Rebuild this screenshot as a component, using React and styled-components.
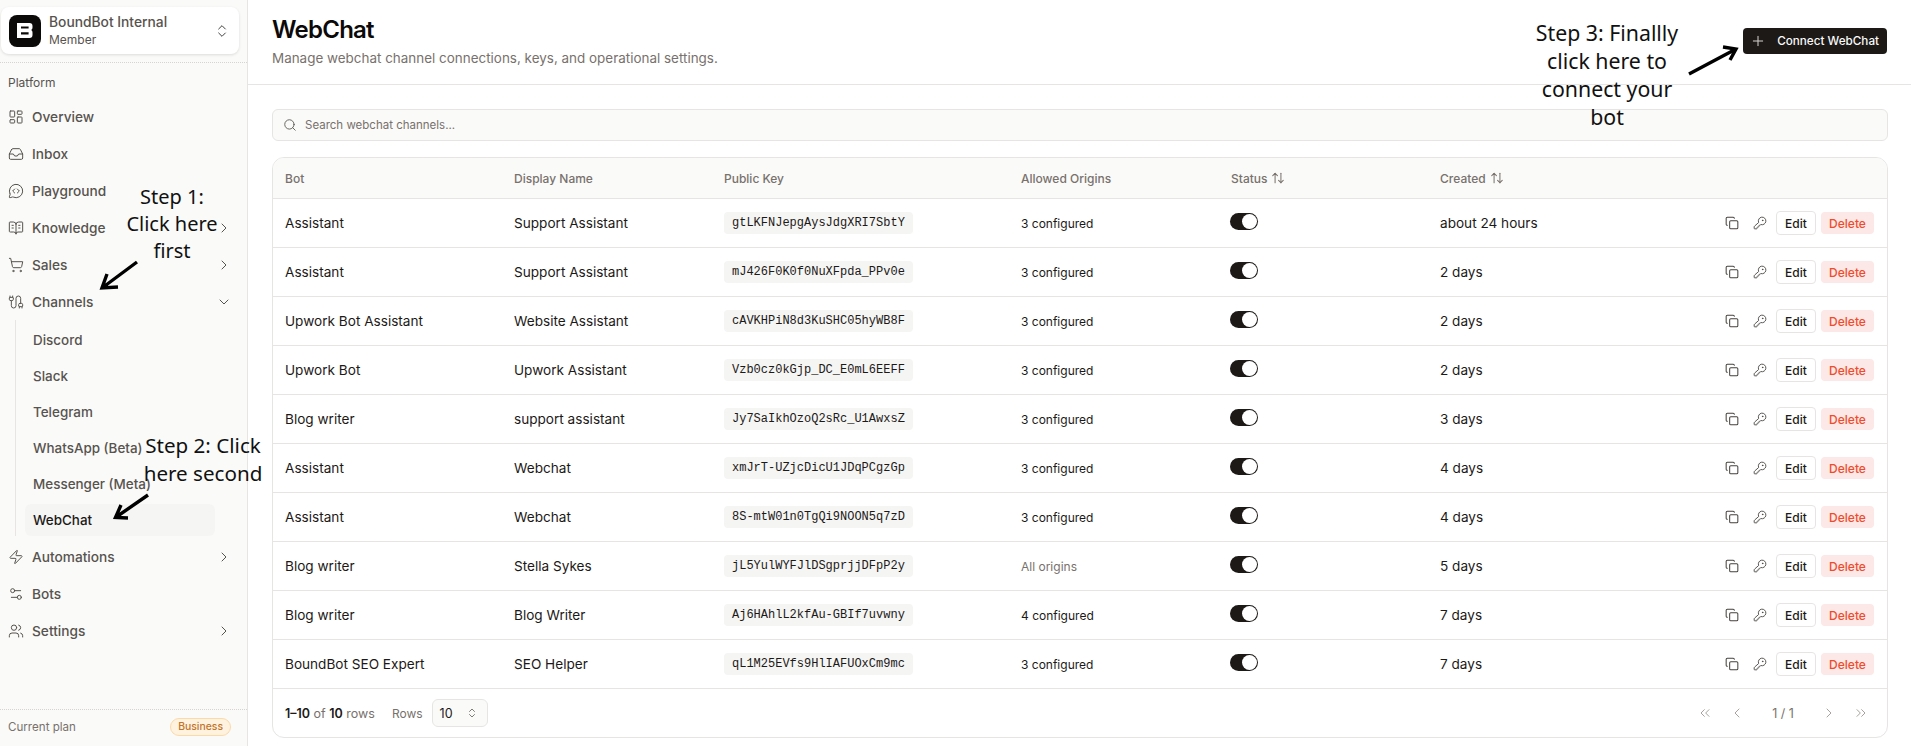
import React from 'react';
import styled, { createGlobalStyle } from 'styled-components';
import {
  LayoutDashboard,
  Inbox,
  MessageCircleCode,
  BookOpenText,
  ShoppingCart,
  Cable,
  Zap,
  Settings2,
  Users,
  ChevronRight,
  ChevronDown,
  ChevronsUpDown,
  ChevronLeft,
  ChevronsLeft,
  ChevronsRight,
  Search,
  Plus,
  Copy,
  KeyRound,
  ArrowUpDown,
} from 'lucide-react';

const GlobalStyle = createGlobalStyle`
  html, body {
    margin: 0;
    padding: 0;
    height: 100%;
    overflow: hidden;
    background: #fff;
    font-family: Inter, "Liberation Sans", sans-serif;
    color: #1c1917;
  }
  * { box-sizing: border-box; }
`;

const ROWS = [
  ['Assistant', 'Support Assistant', 'gtLKFNJepgAysJdgXRI7SbtY', '3 configured', 'about 24 hours'],
  ['Assistant', 'Support Assistant', 'mJ426F0K0f0NuXFpda_PPv0e', '3 configured', '2 days'],
  ['Upwork Bot Assistant', 'Website Assistant', 'cAVKHPiN8d3KuSHC05hyWB8F', '3 configured', '2 days'],
  ['Upwork Bot', 'Upwork Assistant', 'Vzb0cz0kGjp_DC_E0mL6EEFF', '3 configured', '2 days'],
  ['Blog writer', 'support assistant', 'Jy7SaIkhOzoQ2sRc_U1AwxsZ', '3 configured', '3 days'],
  ['Assistant', 'Webchat', 'xmJrT-UZjcDicU1JDqPCgzGp', '3 configured', '4 days'],
  ['Assistant', 'Webchat', '8S-mtW01n0TgQi9NOON5q7zD', '3 configured', '4 days'],
  ['Blog writer', 'Stella Sykes', 'jL5YulWYFJlDSgprjjDFpP2y', 'All origins', '5 days'],
  ['Blog writer', 'Blog Writer', 'Aj6HAhlL2kfAu-GBIf7uvwny', '4 configured', '7 days'],
  ['BoundBot SEO Expert', 'SEO Helper', 'qL1M25EVfs9HlIAFUOxCm9mc', '3 configured', '7 days'],
];

const NAV_TOP = [
  { label: 'Overview', icon: LayoutDashboard },
  { label: 'Inbox', icon: Inbox },
  { label: 'Playground', icon: MessageCircleCode },
  { label: 'Knowledge', icon: BookOpenText, more: true },
  { label: 'Sales', icon: ShoppingCart, more: true },
];

const SUB_ITEMS = ['Discord', 'Slack', 'Telegram', 'WhatsApp (Beta)', 'Messenger (Meta)'];

const NAV_BOTTOM = [
  { label: 'Automations', icon: Zap, more: true },
  { label: 'Bots', icon: Settings2 },
  { label: 'Settings', icon: Users, more: true },
];

const NavLink = ({ item }) => {
  const Icon = item.icon;
  return (
    <NavItem>
      <Icon size={16} strokeWidth={1.5} />
      <NavLabel>{item.label}</NavLabel>
      {item.more && <ChevronRight size={16} strokeWidth={1.5} />}
    </NavItem>
  );
};

const Arrow = ({ $x, $y, w, h, d }) => (
  <ArrowSvg $x={$x} $y={$y} width={w} height={h} viewBox={`0 0 ${w} ${h}`}>
    <path d={d} fill="none" stroke="#000" strokeWidth="3.4" />
  </ArrowSvg>
);

const App = () => (
  <Page>
    <GlobalStyle />
    <Sidebar>
      <TeamWrap>
        <TeamCard>
          <TeamLogo>
            <svg width="16" height="15" viewBox="0 0 16 15">
              <path
                fillRule="evenodd"
                d="M0 0h12.5A3 3 0 0 1 15.5 3v1.5a2.6 2.6 0 0 1-1 2.2l-.3.3.3.3a2.6 2.6 0 0 1 1 2.2V12a3 3 0 0 1-3 3H0zM4 3.4v2.2h7.6V3.4zM4 9.2v2.4h7.6V9.2z"
                fill="#fff"
              />
            </svg>
          </TeamLogo>
          <TeamText>
            <TeamName>BoundBot Internal</TeamName>
            <TeamRole>Member</TeamRole>
          </TeamText>
          <ChevronsUpDown size={16} strokeWidth={1.5} color="#44403c" />
        </TeamCard>
      </TeamWrap>
      <NavSection>
        <SectionLabel>Platform</SectionLabel>
        {NAV_TOP.map((item) => (
          <NavLink key={item.label} item={item} />
        ))}
        <NavItem>
          <Cable size={16} strokeWidth={1.5} />
          <NavLabel>Channels</NavLabel>
          <ChevronDown size={16} strokeWidth={1.5} />
        </NavItem>
        <SubList>
          {SUB_ITEMS.map((label) => (
            <SubItem key={label}>{label}</SubItem>
          ))}
          <SubItem $active>WebChat</SubItem>
        </SubList>
        {NAV_BOTTOM.map((item) => (
          <NavLink key={item.label} item={item} />
        ))}
      </NavSection>
      <PlanBar>
        <PlanLabel>Current plan</PlanLabel>
        <PlanBadge>Business</PlanBadge>
      </PlanBar>
    </Sidebar>

    <Main>
      <Header>
        <div>
          <Title>WebChat</Title>
          <Subtitle>Manage webchat channel connections, keys, and operational settings.</Subtitle>
        </div>
        <ConnectButton>
          <Plus size={16} strokeWidth={1.5} color="#d6d3d1" />
          Connect WebChat
        </ConnectButton>
      </Header>
      <Content>
        <SearchBox>
          <Search size={14} strokeWidth={1.5} color="#57534e" />
          <SearchText>Search webchat channels...</SearchText>
        </SearchBox>
        <TableCard>
          <HeadRow>
            <HeadCell>Bot</HeadCell>
            <HeadCell>Display Name</HeadCell>
            <HeadCell>Public Key</HeadCell>
            <HeadCell>Allowed Origins</HeadCell>
            <HeadCell>
              Status <ArrowUpDown size={14} strokeWidth={1.75} />
            </HeadCell>
            <HeadCell>
              Created <ArrowUpDown size={14} strokeWidth={1.75} />
            </HeadCell>
            <span />
          </HeadRow>
          {ROWS.map(([bot, name, key, origins, created]) => (
            <BodyRow key={key}>
              <BodyCell>{bot}</BodyCell>
              <BodyCell>{name}</BodyCell>
              <BodyCell>
                <KeyChip>{key}</KeyChip>
              </BodyCell>
              <OriginCell $muted={origins === 'All origins'}>{origins}</OriginCell>
              <BodyCell>
                <Toggle />
              </BodyCell>
              <BodyCell>{created}</BodyCell>
              <Actions>
                <IconAction>
                  <Copy size={14} strokeWidth={1.75} />
                </IconAction>
                <IconAction>
                  <KeyRound size={14} strokeWidth={1.5} />
                </IconAction>
                <EditButton>Edit</EditButton>
                <DeleteButton>Delete</DeleteButton>
              </Actions>
            </BodyRow>
          ))}
          <TableFooter>
            <RowCount>
              <b>1–10</b> of <b>10</b> rows
            </RowCount>
            <RowsLabel>Rows</RowsLabel>
            <RowsSelect>
              10
              <ChevronsUpDown size={12} strokeWidth={1.5} color="#57534e" />
            </RowsSelect>
            <Pager>
              <ChevronsLeft size={16} strokeWidth={1.5} />
              <ChevronLeft size={16} strokeWidth={1.5} />
              <PageText>1 / 1</PageText>
              <ChevronRight size={16} strokeWidth={1.5} />
              <ChevronsRight size={16} strokeWidth={1.5} />
            </Pager>
          </TableFooter>
        </TableCard>
      </Content>
    </Main>

    <Note $x={112} $y={183} $w={120} $size={20} $line={27}>Step 1:<br />Click here<br />first</Note>
    <Arrow $x={96} $y={256} w={46} h={40} d="M41 6L6 32M22 31L6 32L11 18" />
    <Note $x={138} $y={431} $w={130} $size={20.6} $line={28}>Step 2: Click<br />here second</Note>
    <Arrow $x={110} $y={490} w={44} h={34} d="M38 5L5.5 27.5M18 28L5.5 27.5L11 15" />
    <Note $x={1517} $y={19} $w={180} $size={21.3} $line={28}>Step 3: Finallly<br />click here to<br />connect your<br />bot</Note>
    <Arrow $x={1684} $y={42} w={58} h={36} d="M5 32L52 7M39 5L52 7L46 18" />
  </Page>
);

const Page = styled.div`
  position: relative;
  display: flex;
  width: 100%;
  height: 746px;
  overflow: hidden;
`;

const Sidebar = styled.aside`
  flex: 0 0 248px;
  display: flex;
  flex-direction: column;
  background: #fafaf9;
  border-right: 1px solid #e7e5e4;
`;

const TeamWrap = styled.div`
  height: 63px;
  padding: 7px 8px 0 1px;
  border-bottom: 1px dotted #d6d3d1;
`;

const TeamCard = styled.div`
  display: flex;
  align-items: center;
  height: 47px;
  padding: 0 9px 0 8px;
  gap: 8px;
  background: #fff;
  border-radius: 8px;
  box-shadow: 0 1px 3px rgba(0, 0, 0, 0.12);
`;

const TeamLogo = styled.div`
  flex: 0 0 32px;
  height: 32px;
  display: flex;
  align-items: center;
  justify-content: center;
  background: #0c0a09;
  border-radius: 8px;
`;

const TeamText = styled.div`
  flex: 1;
  display: flex;
  flex-direction: column;
  gap: 1px;
`;

const TeamName = styled.span`
  font-size: 13.8px;
  line-height: 17px;
  font-weight: 500;
  color: #57534e;
`;

const TeamRole = styled.span`
  font-size: 12px;
  line-height: 15px;
  color: #57534e;
`;

const NavSection = styled.nav`
  flex: 1;
  display: flex;
  flex-direction: column;
  padding: 11px 8px 0;
`;

const SectionLabel = styled.div`
  height: 18px;
  line-height: 18px;
  font-size: 12px;
  color: #57534e;
  margin-bottom: 6px;
`;

const NavItem = styled.div`
  display: flex;
  align-items: center;
  height: 37px;
  gap: 8px;
  padding-right: 7px;
  color: #57534e;
  svg { flex: none; }
`;

const NavLabel = styled.span`
  flex: 1;
  font-size: 13.7px;
  font-weight: 500;
`;

const SubList = styled.div`
  display: flex;
  flex-direction: column;
  margin: 0 0 2px 7px;
  padding: 2px 24px 0 9px;
  border-left: 1px solid #e7e5e4;
`;

const SubItem = styled.div`
  display: flex;
  align-items: center;
  height: ${(p) => (p.$active ? '32px' : '36px')};
  margin-top: ${(p) => (p.$active ? '2px' : '0')};
  padding-left: 8px;
  font-size: 13.45px;
  font-weight: 500;
  white-space: nowrap;
  border-radius: 6px;
  color: ${(p) => (p.$active ? '#1c1917' : '#57534e')};
  background: ${(p) => (p.$active ? '#f5f5f4' : 'transparent')};
`;

const PlanBar = styled.div`
  display: flex;
  align-items: center;
  justify-content: space-between;
  height: 37px;
  padding: 0 16px 2px 8px;
  border-top: 1px dotted #d6d3d1;
`;

const PlanLabel = styled.span`
  font-size: 11.6px;
  color: #78716c;
`;

const PlanBadge = styled.span`
  padding: 1px 7px;
  font-size: 10.4px;
  line-height: 14px;
  font-weight: 500;
  color: #c2742b;
  background: #fff3e0;
  border: 1px solid #fcd9a8;
  border-radius: 999px;
`;

const Main = styled.main`
  flex: 1;
  min-width: 0;
  display: flex;
  flex-direction: column;
`;

const Header = styled.header`
  display: flex;
  align-items: flex-start;
  justify-content: space-between;
  height: 85px;
  padding: 16px 24px 0 24px;
  border-bottom: 1px solid #e7e5e4;
`;

const Title = styled.h1`
  margin: 0;
  font-size: 24px;
  line-height: 28px;
  font-weight: 600;
  letter-spacing: -0.75px;
  color: #0c0a09;
`;

const Subtitle = styled.p`
  margin: 5px 0 0;
  font-size: 13.44px;
  line-height: 18px;
  color: #78716c;
`;

const ConnectButton = styled.button`
  display: flex;
  align-items: center;
  gap: 11px;
  height: 26px;
  margin-top: 12px;
  padding: 0 8px 0 7px;
  font-family: inherit;
  font-size: 11.7px;
  font-weight: 500;
  color: #fafaf9;
  background: #1c1917;
  border: 0;
  border-radius: 4px;
`;

const Content = styled.div`
  flex: 1;
  display: flex;
  flex-direction: column;
  padding: 24px 23px 0 24px;
`;

const SearchBox = styled.div`
  display: flex;
  align-items: center;
  gap: 8px;
  height: 32px;
  padding: 0 10px;
  background: #fafaf9;
  border: 1px solid #e7e5e4;
  border-radius: 6px;
`;

const SearchText = styled.span`
  font-size: 11.5px;
  color: #78716c;
`;

const TableCard = styled.div`
  margin-top: 16px;
  background: #fff;
  border: 1px solid #e7e5e4;
  border-radius: 12px;
  overflow: hidden;
`;

const columns = '229px 210px 297px 210px 209px 1fr 1fr';

const HeadRow = styled.div`
  display: grid;
  grid-template-columns: ${columns};
  align-items: center;
  height: 41px;
  background: #fafaf9;
  border-bottom: 1px solid #e7e5e4;
`;

const HeadCell = styled.div`
  display: flex;
  align-items: center;
  gap: 4px;
  padding-left: 12px;
  font-size: 12px;
  font-weight: 500;
  color: #78716c;
`;

const BodyRow = styled.div`
  display: grid;
  grid-template-columns: ${columns};
  align-items: center;
  height: 49px;
  border-bottom: 1px solid #e7e5e4;
`;

const BodyCell = styled.div`
  padding-left: 12px;
  font-size: 13.6px;
  color: #1c1917;
  white-space: nowrap;
`;

const OriginCell = styled(BodyCell)`
  font-size: 12px;
  color: ${(p) => (p.$muted ? '#78716c' : '#1c1917')};
`;

const KeyChip = styled.code`
  display: inline-block;
  padding: 3px 8px;
  font-family: "Liberation Mono", monospace;
  font-size: 12px;
  line-height: 16px;
  background: #f5f5f4;
  border-radius: 4px;
`;

const Toggle = styled.span`
  position: relative;
  display: block;
  width: 28px;
  height: 17px;
  margin: -4px 0 0 -1px;
  background: #1c1917;
  border-radius: 999px;
  &::after {
    content: '';
    position: absolute;
    top: 1px;
    right: 1px;
    width: 15px;
    height: 15px;
    background: #fff;
    border-radius: 50%;
  }
`;

const Actions = styled.div`
  display: flex;
  align-items: center;
  justify-content: flex-end;
  padding-right: 13px;
`;

const IconAction = styled.span`
  display: flex;
  align-items: center;
  justify-content: center;
  width: 28px;
  height: 24px;
  color: #44403c;
`;

const EditButton = styled.button`
  height: 24px;
  width: 40px;
  margin-left: 2px;
  padding: 0;
  font-family: inherit;
  font-size: 12px;
  font-weight: 500;
  color: #1c1917;
  background: #fff;
  border: 1px solid #e7e5e4;
  border-radius: 4px;
`;

const DeleteButton = styled.button`
  height: 22px;
  width: 53px;
  margin-left: 5px;
  padding: 0;
  font-family: inherit;
  font-size: 12px;
  font-weight: 500;
  color: #ef4b2c;
  background: #fce8e6;
  border: 0;
  border-radius: 4px;
`;

const TableFooter = styled.div`
  display: flex;
  align-items: center;
  height: 48px;
  padding: 0 12px;
  font-size: 12.5px;
  color: #78716c;
`;

const RowCount = styled.span`
  b {
    font-weight: 600;
    color: #1c1917;
  }
`;

const RowsLabel = styled.span`
  margin-left: 17px;
  font-size: 12px;
`;

const RowsSelect = styled.div`
  display: flex;
  align-items: center;
  justify-content: space-between;
  width: 56px;
  height: 28px;
  margin-left: 9px;
  padding: 0 9px 0 7px;
  color: #1c1917;
  background: #fafaf9;
  border: 1px solid #e7e5e4;
  border-radius: 6px;
`;

const Pager = styled.div`
  display: flex;
  align-items: center;
  gap: 16px;
  margin-left: auto;
  padding-right: 6px;
  color: #a8a29e;
`;

const PageText = styled.span`
  width: 44px;
  text-align: center;
  color: #78716c;
`;

const Note = styled.div`
  position: absolute;
  left: ${(p) => p.$x}px;
  top: ${(p) => p.$y}px;
  width: ${(p) => p.$w}px;
  font-family: "Noto Sans", sans-serif;
  font-size: ${(p) => p.$size}px;
  line-height: ${(p) => p.$line}px;
  text-align: center;
  color: #111;
`;

const ArrowSvg = styled.svg`
  position: absolute;
  left: ${(p) => p.$x}px;
  top: ${(p) => p.$y}px;
`;

export default App;
